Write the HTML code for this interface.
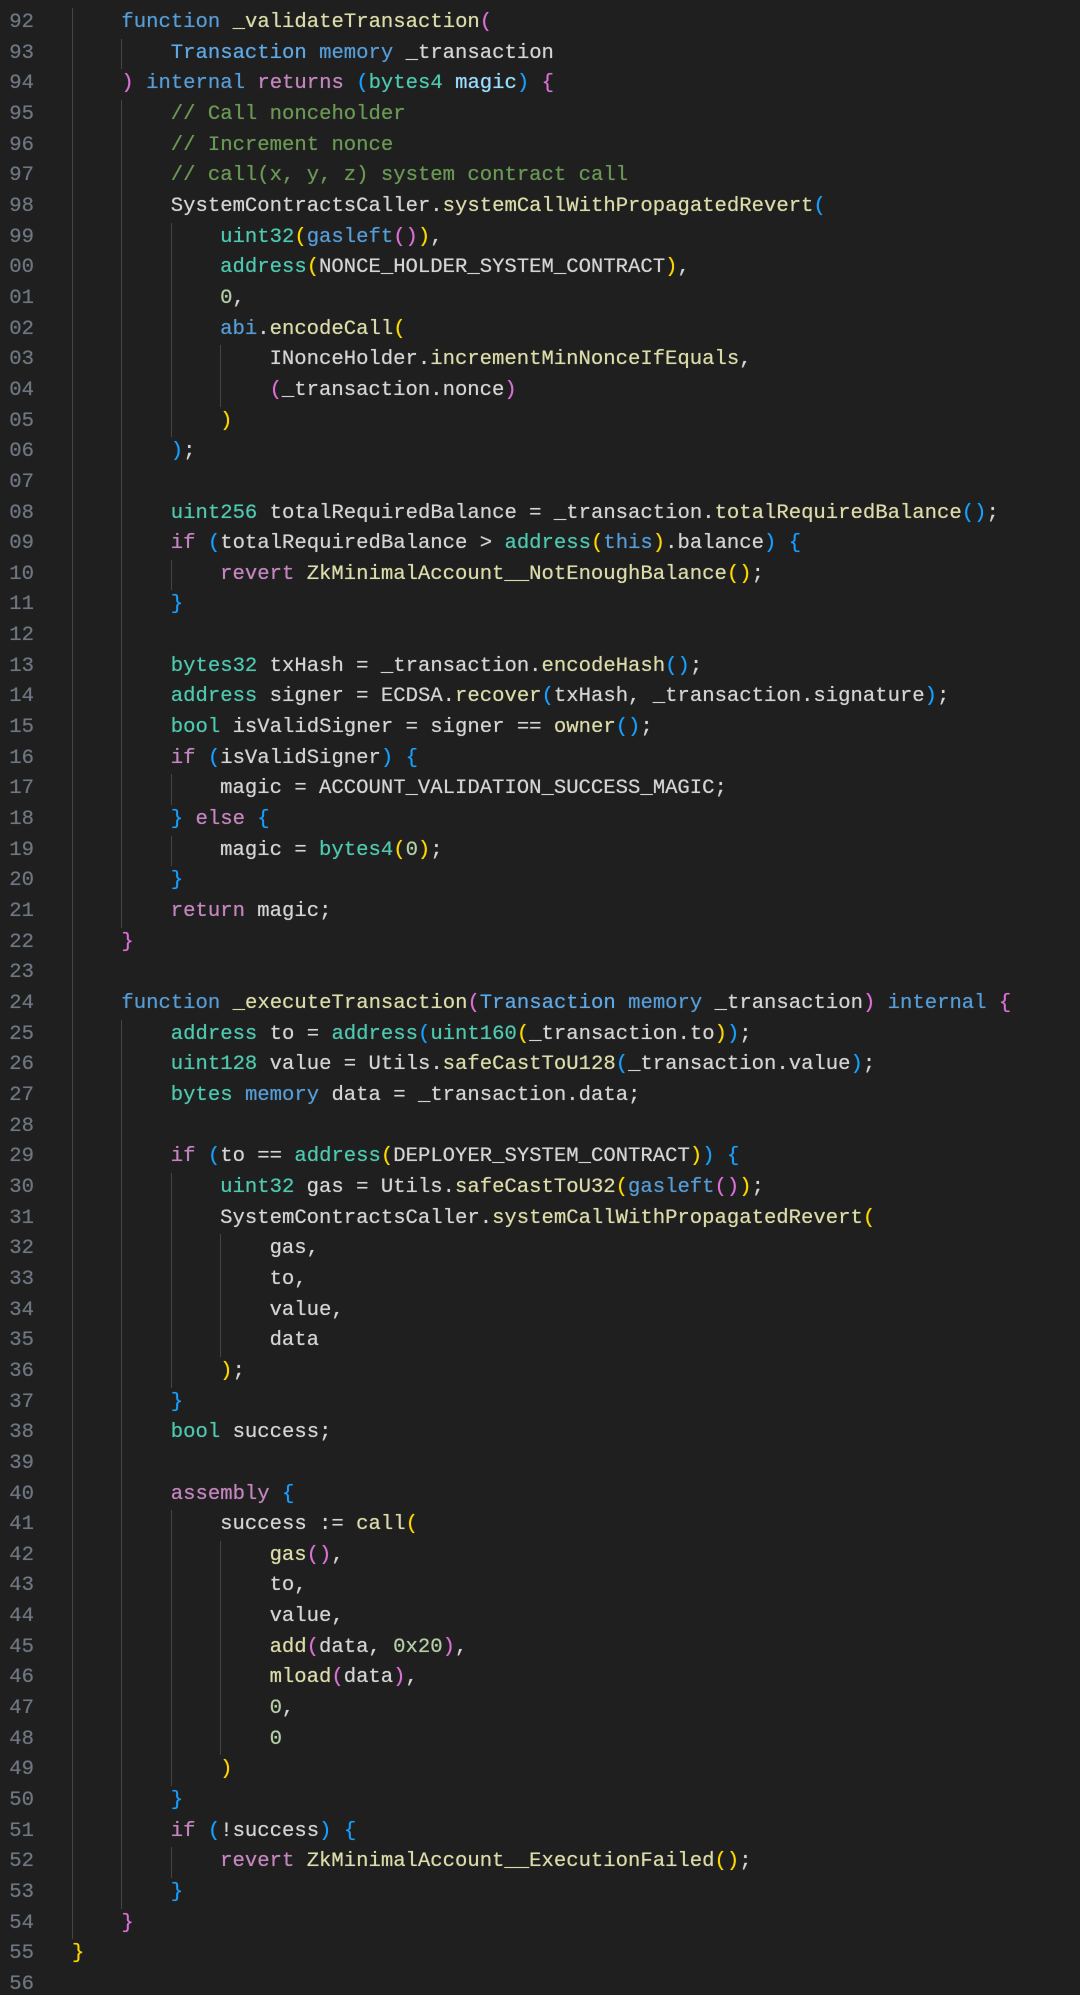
<!DOCTYPE html>
<html><head><meta charset="utf-8"><style>
html,body{margin:0;padding:0;background:#1f1f1f;width:1080px;height:1995px;overflow:hidden}
.ed{position:relative;padding-top:8px;font-family:"Liberation Mono",monospace;font-size:20.6px;color:#d4d4d4;text-shadow:0 0 0.6px currentColor}
.l{height:30.66px;line-height:30.66px;white-space:pre;position:relative}
.n{position:absolute;left:0;width:34px;text-align:right;color:#6e7681}
.c{position:absolute;left:72px}
.g{display:inline-block;width:49.4px;height:30.66px;vertical-align:top;box-shadow:inset 1px 0 0 #454545}
.k{color:#569cd6}.p{color:#c586c0}.f{color:#dcdcaa}.v{color:#9cdcfe}.t{color:#4ec9b0}.m{color:#b5cea8}.cm{color:#6a9955}.K{color:#d4d4d4}.s{color:#5fa8e6}
.b1{color:#ffd700}.b2{color:#da70d6}.b3{color:#179fff}
</style></head><body><div class="ed">
<div class="l"><span class="n">92</span><span class="c"><span class="g"></span><span class="k">function</span> <span class="f">_validateTransaction</span><span class="b2">(</span></span></div>
<div class="l"><span class="n">93</span><span class="c"><span class="g"></span><span class="g"></span><span class="s">Transaction</span> <span class="k">memory</span> <span class="K">_transaction</span></span></div>
<div class="l"><span class="n">94</span><span class="c"><span class="g"></span><span class="b2">)</span> <span class="k">internal</span> <span class="p">returns</span> <span class="b3">(</span><span class="t">bytes4</span> <span class="v">magic</span><span class="b3">)</span> <span class="b2">{</span></span></div>
<div class="l"><span class="n">95</span><span class="c"><span class="g"></span><span class="g"></span><span class="cm">// Call nonceholder</span></span></div>
<div class="l"><span class="n">96</span><span class="c"><span class="g"></span><span class="g"></span><span class="cm">// Increment nonce</span></span></div>
<div class="l"><span class="n">97</span><span class="c"><span class="g"></span><span class="g"></span><span class="cm">// call(x, y, z) system contract call</span></span></div>
<div class="l"><span class="n">98</span><span class="c"><span class="g"></span><span class="g"></span>SystemContractsCaller.<span class="f">systemCallWithPropagatedRevert</span><span class="b3">(</span></span></div>
<div class="l"><span class="n">99</span><span class="c"><span class="g"></span><span class="g"></span><span class="g"></span><span class="t">uint32</span><span class="b1">(</span><span class="k">gasleft</span><span class="b2">()</span><span class="b1">)</span>,</span></div>
<div class="l"><span class="n">00</span><span class="c"><span class="g"></span><span class="g"></span><span class="g"></span><span class="t">address</span><span class="b1">(</span>NONCE_HOLDER_SYSTEM_CONTRACT<span class="b1">)</span>,</span></div>
<div class="l"><span class="n">01</span><span class="c"><span class="g"></span><span class="g"></span><span class="g"></span><span class="m">0</span>,</span></div>
<div class="l"><span class="n">02</span><span class="c"><span class="g"></span><span class="g"></span><span class="g"></span><span class="k">abi</span>.<span class="f">encodeCall</span><span class="b1">(</span></span></div>
<div class="l"><span class="n">03</span><span class="c"><span class="g"></span><span class="g"></span><span class="g"></span><span class="g"></span>INonceHolder.<span class="f">incrementMinNonceIfEquals</span>,</span></div>
<div class="l"><span class="n">04</span><span class="c"><span class="g"></span><span class="g"></span><span class="g"></span><span class="g"></span><span class="b2">(</span>_transaction.nonce<span class="b2">)</span></span></div>
<div class="l"><span class="n">05</span><span class="c"><span class="g"></span><span class="g"></span><span class="g"></span><span class="b1">)</span></span></div>
<div class="l"><span class="n">06</span><span class="c"><span class="g"></span><span class="g"></span><span class="b3">)</span>;</span></div>
<div class="l"><span class="n">07</span><span class="c"><span class="g"></span><span class="g"></span></span></div>
<div class="l"><span class="n">08</span><span class="c"><span class="g"></span><span class="g"></span><span class="t">uint256</span> totalRequiredBalance = _transaction.<span class="f">totalRequiredBalance</span><span class="b3">()</span>;</span></div>
<div class="l"><span class="n">09</span><span class="c"><span class="g"></span><span class="g"></span><span class="p">if</span> <span class="b3">(</span>totalRequiredBalance &gt; <span class="t">address</span><span class="b1">(</span><span class="k">this</span><span class="b1">)</span>.balance<span class="b3">)</span> <span class="b3">{</span></span></div>
<div class="l"><span class="n">10</span><span class="c"><span class="g"></span><span class="g"></span><span class="g"></span><span class="p">revert</span> <span class="f">ZkMinimalAccount__NotEnoughBalance</span><span class="b1">()</span>;</span></div>
<div class="l"><span class="n">11</span><span class="c"><span class="g"></span><span class="g"></span><span class="b3">}</span></span></div>
<div class="l"><span class="n">12</span><span class="c"><span class="g"></span><span class="g"></span></span></div>
<div class="l"><span class="n">13</span><span class="c"><span class="g"></span><span class="g"></span><span class="t">bytes32</span> txHash = _transaction.<span class="f">encodeHash</span><span class="b3">()</span>;</span></div>
<div class="l"><span class="n">14</span><span class="c"><span class="g"></span><span class="g"></span><span class="t">address</span> signer = ECDSA.<span class="f">recover</span><span class="b3">(</span>txHash, _transaction.signature<span class="b3">)</span>;</span></div>
<div class="l"><span class="n">15</span><span class="c"><span class="g"></span><span class="g"></span><span class="t">bool</span> isValidSigner = signer == <span class="f">owner</span><span class="b3">()</span>;</span></div>
<div class="l"><span class="n">16</span><span class="c"><span class="g"></span><span class="g"></span><span class="p">if</span> <span class="b3">(</span>isValidSigner<span class="b3">)</span> <span class="b3">{</span></span></div>
<div class="l"><span class="n">17</span><span class="c"><span class="g"></span><span class="g"></span><span class="g"></span>magic = ACCOUNT_VALIDATION_SUCCESS_MAGIC;</span></div>
<div class="l"><span class="n">18</span><span class="c"><span class="g"></span><span class="g"></span><span class="b3">}</span> <span class="p">else</span> <span class="b3">{</span></span></div>
<div class="l"><span class="n">19</span><span class="c"><span class="g"></span><span class="g"></span><span class="g"></span>magic = <span class="t">bytes4</span><span class="b1">(</span><span class="m">0</span><span class="b1">)</span>;</span></div>
<div class="l"><span class="n">20</span><span class="c"><span class="g"></span><span class="g"></span><span class="b3">}</span></span></div>
<div class="l"><span class="n">21</span><span class="c"><span class="g"></span><span class="g"></span><span class="p">return</span> magic;</span></div>
<div class="l"><span class="n">22</span><span class="c"><span class="g"></span><span class="b2">}</span></span></div>
<div class="l"><span class="n">23</span><span class="c"><span class="g"></span></span></div>
<div class="l"><span class="n">24</span><span class="c"><span class="g"></span><span class="k">function</span> <span class="f">_executeTransaction</span><span class="b2">(</span><span class="s">Transaction</span> <span class="k">memory</span> _transaction<span class="b2">)</span> <span class="k">internal</span> <span class="b2">{</span></span></div>
<div class="l"><span class="n">25</span><span class="c"><span class="g"></span><span class="g"></span><span class="t">address</span> to = <span class="t">address</span><span class="b3">(</span><span class="t">uint160</span><span class="b1">(</span>_transaction.to<span class="b1">)</span><span class="b3">)</span>;</span></div>
<div class="l"><span class="n">26</span><span class="c"><span class="g"></span><span class="g"></span><span class="t">uint128</span> value = Utils.<span class="f">safeCastToU128</span><span class="b3">(</span>_transaction.value<span class="b3">)</span>;</span></div>
<div class="l"><span class="n">27</span><span class="c"><span class="g"></span><span class="g"></span><span class="t">bytes</span> <span class="k">memory</span> data = _transaction.data;</span></div>
<div class="l"><span class="n">28</span><span class="c"><span class="g"></span><span class="g"></span></span></div>
<div class="l"><span class="n">29</span><span class="c"><span class="g"></span><span class="g"></span><span class="p">if</span> <span class="b3">(</span>to == <span class="t">address</span><span class="b1">(</span>DEPLOYER_SYSTEM_CONTRACT<span class="b1">)</span><span class="b3">)</span> <span class="b3">{</span></span></div>
<div class="l"><span class="n">30</span><span class="c"><span class="g"></span><span class="g"></span><span class="g"></span><span class="t">uint32</span> gas = Utils.<span class="f">safeCastToU32</span><span class="b1">(</span><span class="k">gasleft</span><span class="b2">()</span><span class="b1">)</span>;</span></div>
<div class="l"><span class="n">31</span><span class="c"><span class="g"></span><span class="g"></span><span class="g"></span>SystemContractsCaller.<span class="f">systemCallWithPropagatedRevert</span><span class="b1">(</span></span></div>
<div class="l"><span class="n">32</span><span class="c"><span class="g"></span><span class="g"></span><span class="g"></span><span class="g"></span>gas,</span></div>
<div class="l"><span class="n">33</span><span class="c"><span class="g"></span><span class="g"></span><span class="g"></span><span class="g"></span>to,</span></div>
<div class="l"><span class="n">34</span><span class="c"><span class="g"></span><span class="g"></span><span class="g"></span><span class="g"></span>value,</span></div>
<div class="l"><span class="n">35</span><span class="c"><span class="g"></span><span class="g"></span><span class="g"></span><span class="g"></span>data</span></div>
<div class="l"><span class="n">36</span><span class="c"><span class="g"></span><span class="g"></span><span class="g"></span><span class="b1">)</span>;</span></div>
<div class="l"><span class="n">37</span><span class="c"><span class="g"></span><span class="g"></span><span class="b3">}</span></span></div>
<div class="l"><span class="n">38</span><span class="c"><span class="g"></span><span class="g"></span><span class="t">bool</span> success;</span></div>
<div class="l"><span class="n">39</span><span class="c"><span class="g"></span><span class="g"></span></span></div>
<div class="l"><span class="n">40</span><span class="c"><span class="g"></span><span class="g"></span><span class="p">assembly</span> <span class="b3">{</span></span></div>
<div class="l"><span class="n">41</span><span class="c"><span class="g"></span><span class="g"></span><span class="g"></span>success := <span class="f">call</span><span class="b1">(</span></span></div>
<div class="l"><span class="n">42</span><span class="c"><span class="g"></span><span class="g"></span><span class="g"></span><span class="g"></span><span class="f">gas</span><span class="b2">()</span>,</span></div>
<div class="l"><span class="n">43</span><span class="c"><span class="g"></span><span class="g"></span><span class="g"></span><span class="g"></span>to,</span></div>
<div class="l"><span class="n">44</span><span class="c"><span class="g"></span><span class="g"></span><span class="g"></span><span class="g"></span>value,</span></div>
<div class="l"><span class="n">45</span><span class="c"><span class="g"></span><span class="g"></span><span class="g"></span><span class="g"></span><span class="f">add</span><span class="b2">(</span>data, <span class="m">0x20</span><span class="b2">)</span>,</span></div>
<div class="l"><span class="n">46</span><span class="c"><span class="g"></span><span class="g"></span><span class="g"></span><span class="g"></span><span class="f">mload</span><span class="b2">(</span>data<span class="b2">)</span>,</span></div>
<div class="l"><span class="n">47</span><span class="c"><span class="g"></span><span class="g"></span><span class="g"></span><span class="g"></span><span class="m">0</span>,</span></div>
<div class="l"><span class="n">48</span><span class="c"><span class="g"></span><span class="g"></span><span class="g"></span><span class="g"></span><span class="m">0</span></span></div>
<div class="l"><span class="n">49</span><span class="c"><span class="g"></span><span class="g"></span><span class="g"></span><span class="b1">)</span></span></div>
<div class="l"><span class="n">50</span><span class="c"><span class="g"></span><span class="g"></span><span class="b3">}</span></span></div>
<div class="l"><span class="n">51</span><span class="c"><span class="g"></span><span class="g"></span><span class="p">if</span> <span class="b3">(</span>!success<span class="b3">)</span> <span class="b3">{</span></span></div>
<div class="l"><span class="n">52</span><span class="c"><span class="g"></span><span class="g"></span><span class="g"></span><span class="p">revert</span> <span class="f">ZkMinimalAccount__ExecutionFailed</span><span class="b1">()</span>;</span></div>
<div class="l"><span class="n">53</span><span class="c"><span class="g"></span><span class="g"></span><span class="b3">}</span></span></div>
<div class="l"><span class="n">54</span><span class="c"><span class="g"></span><span class="b2">}</span></span></div>
<div class="l"><span class="n">55</span><span class="c"><span class="b1">}</span></span></div>
<div class="l"><span class="n">56</span><span class="c"></span></div>
</div></body></html>
